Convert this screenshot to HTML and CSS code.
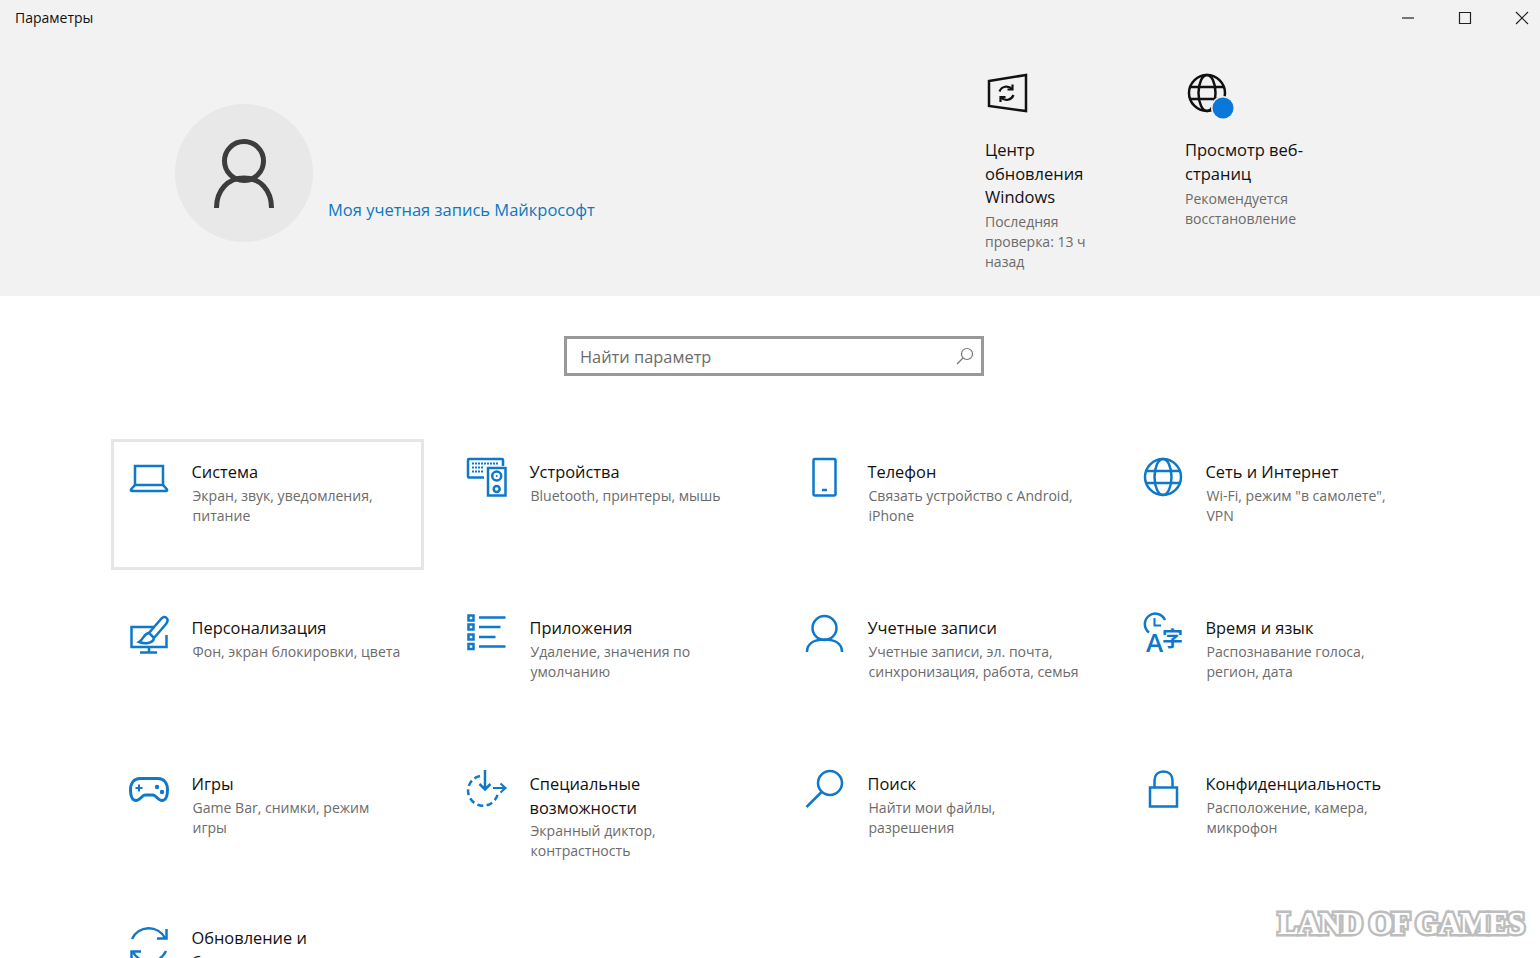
FILE: index.html
```html
<!DOCTYPE html>
<html lang="ru">
<head>
<meta charset="utf-8">
<title>Параметры</title>
<link rel="stylesheet" href="styles.css">
</head>
<body>
<div class="app">
  <header class="hero">
    <div class="titlebar">
      <span class="app-title">Параметры</span>
      <div class="controls">
        <svg class="ctl" viewBox="0 0 14 14"><path d="M1 7H13"/></svg>
        <svg class="ctl" viewBox="0 0 14 14"><path d="M1.5 1.5H12.5V12.5H1.5Z"/></svg>
        <svg class="ctl" viewBox="0 0 14 14"><path d="M1 1L13 13M13 1L1 13"/></svg>
      </div>
    </div>
    <div class="hero-body">
      <div class="profile">
        <div class="avatar">
          <svg class="avatar-icon" viewBox="0 0 138 138"><circle cx="69" cy="57" r="19.500"/><path d="M41.500 104C41.500 86 53 74 69 74S96.500 86 96.500 104"/></svg>
        </div>
        <a class="account-link">Моя учетная запись Майкрософт</a>
      </div>
      <div class="tile tile-update">
        <svg class="tile-icon" viewBox="0 0 44 40"><path class="k" d="M4 9L41 3V39L4 34Z"/><path class="k thin" d="M14.500 19.500A7.500 7.500 0 0 1 27 17M28.500 23A7.500 7.500 0 0 1 16 25.500"/><path class="k thin" d="M27.500 12.500V17.500H22.500M15.500 30V25H20.500"/></svg>
        <div class="tile-title">Центр<br>обновления<br>Windows</div>
        <div class="tile-desc">Последняя<br>проверка: 13 ч<br>назад</div>
      </div>
      <div class="tile tile-browse">
        <svg class="tile-icon" viewBox="0 0 52 40"><g class="k"><circle cx="22" cy="21" r="18"/><ellipse cx="22" cy="21" rx="8.500" ry="18"/><path d="M5 15H39M5 27H39"/></g><circle class="dot-ring" cx="38" cy="36" r="12"/><circle class="dot" cx="38" cy="36" r="10.500"/></svg>
        <div class="tile-title">Просмотр веб-<br>страниц</div>
        <div class="tile-desc">Рекомендуется<br>восстановление</div>
      </div>
    </div>
  </header>

  <main class="main">
    <div class="search">
      <span class="search-text">Найти параметр</span>
      <svg class="search-icon" viewBox="0 0 18 18"><circle cx="11" cy="7" r="5.500"/><path d="M7 11L1 17"/></svg>
    </div>

    <div class="grid">
      <div class="card selected">
        <svg class="icon" viewBox="0 0 40 40"><path d="M6 9H34V28H6Z"/><path d="M6 28L2 32.500Q1.500 34 3 34H37Q38.500 34 38 32.500L34 28"/></svg>
        <div class="text"><div class="title">Система</div><div class="desc">Экран, звук, уведомления,<br>питание</div></div>
      </div>
      <div class="card">
        <svg class="icon" viewBox="0 0 40 40"><path d="M17 20.500H2Q1 20.500 1 19.500V3Q1 2 2 2H35Q36 2 36 3V9"/><path class="keys" d="M5 6.500H32M5 10.500H17M5 14.500H17"/><path d="M21 11H38.500V38.500H21Z"/><circle cx="29.700" cy="19" r="4.500"/><circle cx="29.700" cy="32" r="3"/><circle class="f" cx="29.700" cy="19" r="1"/></svg>
        <div class="text"><div class="title">Устройства</div><div class="desc">Bluetooth, принтеры, мышь</div></div>
      </div>
      <div class="card">
        <svg class="icon" viewBox="0 0 40 40"><path d="M10 2H29Q30.500 2 30.500 3.500V37Q30.500 38.500 29 38.500H10Q8.500 38.500 8.500 37V3.500Q8.500 2 10 2Z"/><path d="M17 33H22"/></svg>
        <div class="text"><div class="title">Телефон</div><div class="desc">Связать устройство с Android,<br>iPhone</div></div>
      </div>
      <div class="card">
        <svg class="icon" viewBox="0 0 40 40"><circle cx="20" cy="20" r="18"/><ellipse cx="20" cy="20" rx="8.500" ry="18"/><path d="M3.500 14H36.500M3.500 26H36.500"/></svg>
        <div class="text"><div class="title">Сеть и Интернет</div><div class="desc">Wi-Fi, режим "в самолете",<br>VPN</div></div>
      </div>

      <div class="card">
        <svg class="icon" viewBox="0 0 40 40"><path d="M25 14H2.500V34H37.500V22"/><path d="M20 34V39M11 39.500H28"/><path d="M38 5.500C36 3 34 4 32 6L20 20L25 25L37 11C38.500 9 39.500 7.500 38 5.500Z"/><path d="M20 20C15 20 15 26 10 29C15 31 24 31 25 25"/></svg>
        <div class="text"><div class="title">Персонализация</div><div class="desc">Фон, экран блокировки, цвета</div></div>
      </div>
      <div class="card">
        <svg class="icon" viewBox="0 0 40 40"><path d="M1.500 2.500H6.500V7.500H1.500ZM1.500 11.500H6.500V16.500H1.500ZM1.500 21.500H6.500V26.500H1.500ZM1.500 31H6.500V36H1.500Z"/><path d="M12 4.500H38.500M12 14H33.500M12 24H28.500M12 33.500H38.500"/></svg>
        <div class="text"><div class="title">Приложения</div><div class="desc">Удаление, значения по<br>умолчанию</div></div>
      </div>
      <div class="card">
        <svg class="icon" viewBox="0 0 40 40"><circle cx="19.500" cy="15" r="12"/><path d="M2 39C2 30 10 26.500 19.500 26.500S37 30 37 39"/></svg>
        <div class="text"><div class="title">Учетные записи</div><div class="desc">Учетные записи, эл. почта,<br>синхронизация, работа, семья</div></div>
      </div>
      <div class="card">
        <svg class="icon" viewBox="0 0 40 40"><path d="M6 19.500A10.500 10.500 0 1 1 22 7"/><path d="M11.500 5V12.500H18" class="t"/><text class="glyph-a" x="3" y="39">A</text><text class="glyph-z" x="19" y="33">字</text></svg>
        <div class="text"><div class="title">Время и язык</div><div class="desc">Распознавание голоса,<br>регион, дата</div></div>
      </div>

      <div class="card">
        <svg class="icon heavy" viewBox="0 0 40 40"><path d="M11 9.500H29C35 9.500 38.500 14 38.500 21C38.500 27 36.500 31.500 33 31.500C29 31.500 27 26 24 26H16C13 26 11 31.500 7 31.500C3.500 31.500 1.500 27 1.500 21C1.500 14 5 9.500 11 9.500Z"/><path class="t" d="M6.500 19H13.500M10 15.500V22.500"/><circle class="f" cx="28" cy="18" r="2.200"/><circle class="f" cx="33" cy="23" r="2.200"/></svg>
        <div class="text"><div class="title">Игры</div><div class="desc">Game Bar, снимки, режим<br>игры</div></div>
      </div>
      <div class="card">
        <svg class="icon" viewBox="0 0 40 40"><path class="dash" d="M13 7A15 15 0 1 0 31 23"/><path d="M18 1V20M12.500 15L18 20.500L23.500 15"/><path class="t" d="M26 19H38M33.500 14.500L38.500 19L33.500 23.500"/></svg>
        <div class="text"><div class="title">Специальные<br>возможности</div><div class="desc desc-close">Экранный диктор,<br>контрастность</div></div>
      </div>
      <div class="card">
        <svg class="icon" viewBox="0 0 40 40"><circle cx="25" cy="14" r="12"/><path d="M16.500 23L1.500 38"/></svg>
        <div class="text"><div class="title">Поиск</div><div class="desc">Найти мои файлы,<br>разрешения</div></div>
      </div>
      <div class="card">
        <svg class="icon" viewBox="0 0 40 40"><path d="M7 18.500H34V37.500H7Z"/><path d="M11.500 18V11.500C11.500 6 15 2.500 20.500 2.500S29.500 6 29.500 11.500V18"/></svg>
        <div class="text"><div class="title">Конфиденциальность</div><div class="desc">Расположение, камера,<br>микрофон</div></div>
      </div>

      <div class="card">
        <svg class="icon" viewBox="0 0 40 40"><path d="M3 14A18.500 18.500 0 0 1 36 13"/><path d="M37.500 4V13.500H28"/><path d="M37 26A18.500 18.500 0 0 1 4 27"/><path d="M2.500 36V26.500H12"/></svg>
        <div class="text text-last"><div class="title">Обновление и<br>безопасность</div><div class="desc">Центр обновления Windows,<br>восстановление</div></div>
      </div>
    </div>
  </main>
  <div class="watermark">LAND OF GAMES</div>
</div>
</body>
</html>
```

FILE: styles.css
```css
* { box-sizing: border-box; }
html, body { margin: 0; height: 100%; overflow: hidden; background: #fff; }
body { font-family: "Open Sans", "Noto Sans", sans-serif; color: #111; }
.app { position: relative; height: 958px; overflow: hidden; display: flex; flex-direction: column; }

.hero { height: 296px; background: #f2f2f2; flex: none; display: flex; flex-direction: column; }
.titlebar { height: 36px; display: flex; align-items: center; justify-content: space-between; flex: none; }
.app-title { margin-left: 15px; font-size: 14px; line-height: 20px; color: #111; }
.controls { display: flex; gap: 43px; margin-right: 11px; }
.ctl { width: 14px; height: 14px; fill: none; stroke: #222; stroke-width: 1.200; }

.hero-body { display: flex; flex: 1; padding-left: 175px; }
.profile { width: 810px; padding-top: 68px; display: flex; align-items: flex-start; flex: none; }
.avatar { width: 138px; height: 138px; border-radius: 50%; background: #e8e8e8; flex: none; }
.avatar-icon { width: 138px; height: 138px; fill: none; stroke: #3c3c3c; stroke-width: 5; display: block; }
.account-link { margin: 94px 0 0 15px; font-size: 16.500px; line-height: 24px; color: #0a78c4; white-space: nowrap; }

.tile { width: 200px; padding-top: 36px; flex: none; }
.tile-icon { height: 40px; display: block; margin-bottom: 26px; overflow: visible; }
.tile-update .tile-icon { width: 44px; }
.tile-browse .tile-icon { width: 52px; }
.k { fill: none; stroke: #111; stroke-width: 2.500; }
.k.thin { stroke-width: 2.200; }
.dot { fill: #0a78d8; }
.dot-ring { fill: #f2f2f2; }
.tile-title { font-size: 16.500px; line-height: 23.500px; color: #111; }
.tile-desc { margin-top: 3.500px; font-size: 14px; line-height: 20px; color: #6b6b6b; }

.main { flex: 1; padding-top: 40px; }
.search { width: 420px; height: 40px; margin: 0 0 63px 564px; border: 3px solid #999; display: flex; align-items: center; justify-content: space-between; padding: 0 7px 0 13px; }
.search-text { font-size: 16.400px; color: #6b6b6b; }
.search-icon { width: 18px; height: 18px; fill: none; stroke: #777; stroke-width: 1.200; }

.grid { display: grid; grid-template-columns: repeat(4, 313px); grid-auto-rows: 131px; column-gap: 25px; row-gap: 25px; margin-left: 111px; }
.card { display: flex; gap: 22.500px; border: 3px solid transparent; padding: 15px 0 0 15px; min-width: 0; }
.card.selected { border-color: #e6e6e6; }
.icon { width: 40px; height: 40px; flex: none; fill: none; stroke: #0f78c9; stroke-width: 2.500; overflow: visible; }
.icon.heavy { stroke-width: 3; }
.icon .t { stroke-width: 2; }
.icon .keys { stroke-width: 2.200; stroke-dasharray: 2 1; }
.icon .f { fill: #0f78c9; stroke: none; }
.icon .dash { stroke-dasharray: 6 3.500; }
.glyph-a { font: 600 26px "Open Sans", sans-serif; fill: #0f78c9; stroke: none; }
.glyph-z { font: 700 21px "Noto Sans CJK SC", sans-serif; fill: #0f78c9; stroke: none; }
.text { white-space: nowrap; padding-top: 3px; }
.text-last { padding-top: 1px; }
.title { font-size: 16.400px; line-height: 24px; color: #111; }
.desc { margin-top: 2px; margin-left: 1px; font-size: 14.050px; line-height: 20px; color: #6b6b6b; }
.desc-close { margin-top: 1px; }

.watermark { position: absolute; right: 16px; top: 906px; font: 700 31px/36px "Liberation Serif", serif; color: #fff; -webkit-text-stroke: 5px #bdbdbd; paint-order: stroke fill; letter-spacing: -1px; white-space: nowrap; }
```
